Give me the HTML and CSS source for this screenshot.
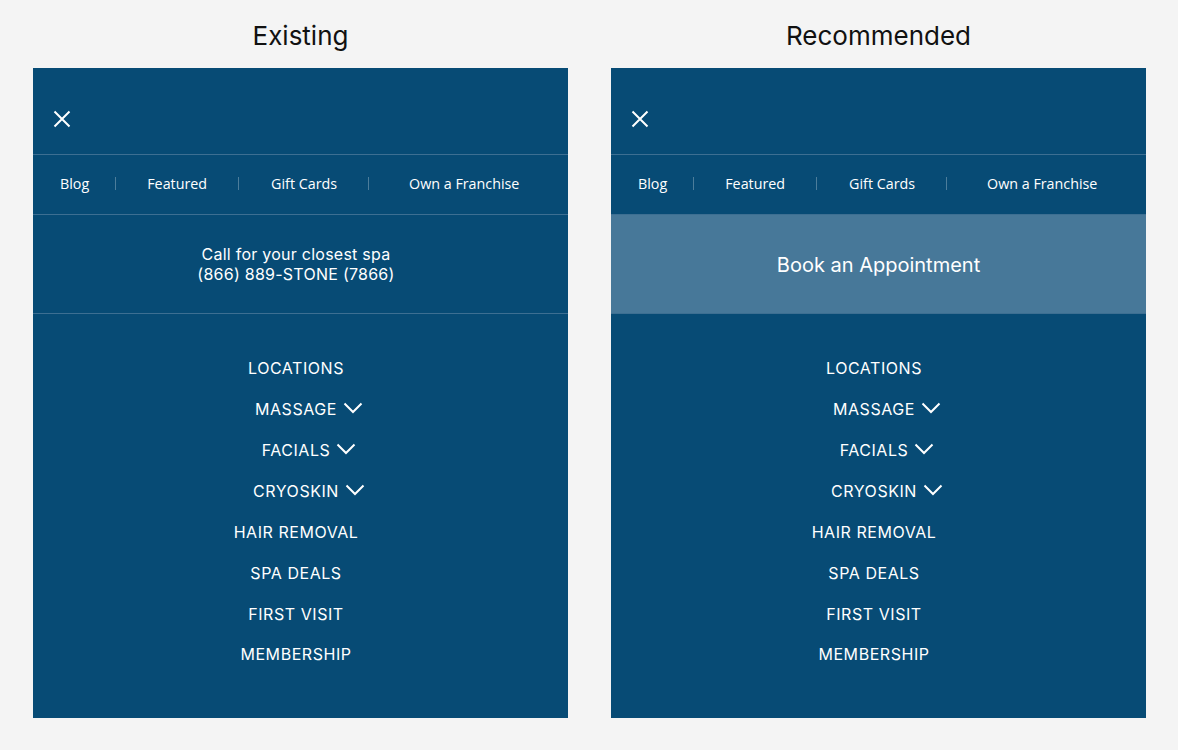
FILE: index.html
```html
<!DOCTYPE html>
<html>
<head>
<meta charset="utf-8">
<link rel="stylesheet" href="styles.css">
</head>
<body>
<div class="page">
  <section class="column">
    <h2 class="title">Existing</h2>
    <div class="panel">
      <div class="header">
        <svg class="close" width="18" height="18" viewBox="0 0 18 18"><path d="M1.5 1.5 L16.5 16.5 M16.5 1.5 L1.5 16.5" stroke="#fff" stroke-width="2" fill="none"/></svg>
      </div>
      <nav class="links">
        <span class="link">Blog</span>
        <span class="link">Featured</span>
        <span class="link gift">Gift Cards</span>
        <span class="link">Own a Franchise</span>
      </nav>
      <div class="call">
        <div>Call for your closest spa</div>
        <div>(866) 889-STONE (7866)</div>
      </div>
      <ul class="menu">
        <li>LOCATIONS</li>
        <li>MASSAGE<svg class="chev" width="20" height="12" viewBox="0 0 20 12"><path d="M1.5 1.5 L10 10 L18.5 1.5" stroke="#fff" stroke-width="2" fill="none"/></svg></li>
        <li>FACIALS<svg class="chev" width="20" height="12" viewBox="0 0 20 12"><path d="M1.5 1.5 L10 10 L18.5 1.5" stroke="#fff" stroke-width="2" fill="none"/></svg></li>
        <li>CRYOSKIN<svg class="chev" width="20" height="12" viewBox="0 0 20 12"><path d="M1.5 1.5 L10 10 L18.5 1.5" stroke="#fff" stroke-width="2" fill="none"/></svg></li>
        <li>HAIR REMOVAL</li>
        <li>SPA DEALS</li>
        <li>FIRST VISIT</li>
        <li>MEMBERSHIP</li>
      </ul>
    </div>
  </section>
  <section class="column">
    <h2 class="title">Recommended</h2>
    <div class="panel">
      <div class="header">
        <svg class="close" width="18" height="18" viewBox="0 0 18 18"><path d="M1.5 1.5 L16.5 16.5 M16.5 1.5 L1.5 16.5" stroke="#fff" stroke-width="2" fill="none"/></svg>
      </div>
      <nav class="links">
        <span class="link">Blog</span>
        <span class="link">Featured</span>
        <span class="link gift">Gift Cards</span>
        <span class="link">Own a Franchise</span>
      </nav>
      <div class="book">Book an Appointment</div>
      <ul class="menu">
        <li>LOCATIONS</li>
        <li>MASSAGE<svg class="chev" width="20" height="12" viewBox="0 0 20 12"><path d="M1.5 1.5 L10 10 L18.5 1.5" stroke="#fff" stroke-width="2" fill="none"/></svg></li>
        <li>FACIALS<svg class="chev" width="20" height="12" viewBox="0 0 20 12"><path d="M1.5 1.5 L10 10 L18.5 1.5" stroke="#fff" stroke-width="2" fill="none"/></svg></li>
        <li>CRYOSKIN<svg class="chev" width="20" height="12" viewBox="0 0 20 12"><path d="M1.5 1.5 L10 10 L18.5 1.5" stroke="#fff" stroke-width="2" fill="none"/></svg></li>
        <li>HAIR REMOVAL</li>
        <li>SPA DEALS</li>
        <li>FIRST VISIT</li>
        <li>MEMBERSHIP</li>
      </ul>
    </div>
  </section>
</div>
</body>
</html>
```

FILE: styles.css
```css
* { box-sizing: border-box; }
html, body { margin: 0; padding: 0; }
body {
  background: #f4f4f4;
  font-family: Inter, "Liberation Sans", sans-serif;
  width: 1178px;
  height: 750px;
  overflow: hidden;
}
.page {
  display: flex;
  gap: 43px;
  padding-left: 33px;
}
.column {
  width: 535px;
  display: flex;
  flex-direction: column;
}
.title {
  margin: 0;
  height: 68px;
  display: flex;
  align-items: center;
  justify-content: center;
  font-weight: 400;
  font-size: 26px;
  color: #111;
  padding-top: 3px;
}
.panel {
  background: #074b75;
  height: 650px;
  color: #fff;
  display: flex;
  flex-direction: column;
}
.header {
  height: 87px;
  display: flex;
  align-items: center;
  padding-left: 20px;
  padding-top: 16px;
  border-bottom: 1px solid #3d6f92;
}
.close { display: block; }
.links {
  height: 60px;
  display: flex;
  align-items: center;
  border-bottom: 1px solid #3d6f92;
  font-family: "Open Sans", "Noto Sans", sans-serif;
  font-size: 14.3px;
  padding-bottom: 3px;
}
.link {
  padding: 0 31px;
  line-height: 13px;
  border-right: 1px solid rgba(255,255,255,0.28);
}
.link:first-child { padding-left: 27px; padding-right: 26px; }
.link.gift { padding-left: 32px; }
.link:last-child { border-right: none; padding-left: 40px; }
.call {
  height: 99px;
  border-bottom: 1px solid #3d6f92;
  display: flex;
  flex-direction: column;
  justify-content: center;
  align-items: center;
  font-size: 16px;
  letter-spacing: 0.25px;
  line-height: 20px;
  padding-right: 9px;
}
.book {
  height: 99px;
  background: #477899;
  border-bottom: 1px solid #3d6f92;
  display: flex;
  align-items: center;
  justify-content: center;
  font-size: 20px;
  padding-top: 1px;
}
.menu {
  list-style: none;
  margin: 0;
  padding: 34px 9px 0 0;
  display: flex;
  flex-direction: column;
  align-items: center;
}
.menu li {
  height: 40.86px;
  display: flex;
  align-items: center;
  font-size: 16px;
  letter-spacing: 0.55px;
}
.chev {
  margin-left: 6px;
  margin-right: -26px;
  margin-top: -2px;
}
```
